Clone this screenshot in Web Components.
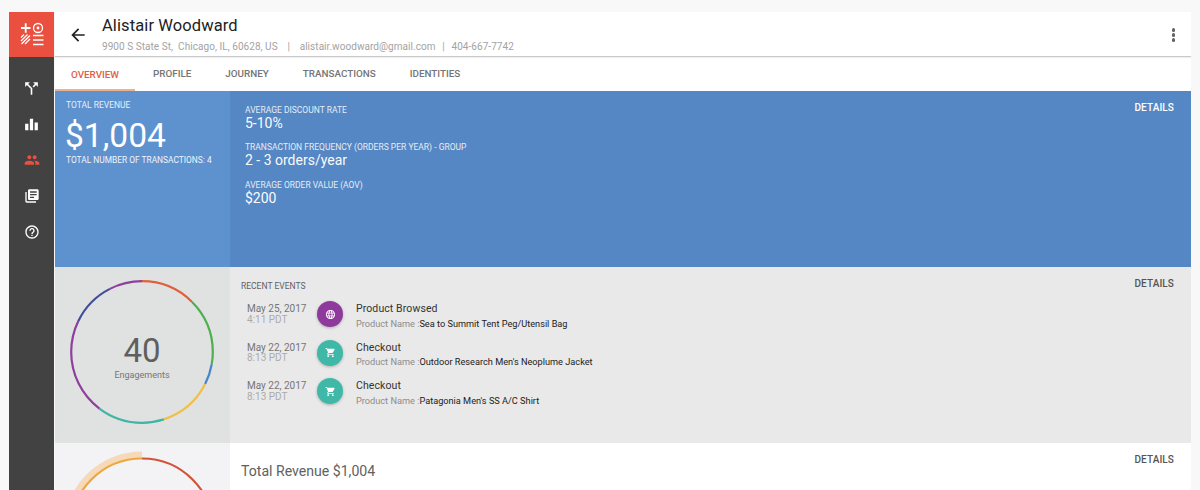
<!DOCTYPE html>
<html>
<head>
<meta charset="utf-8">
<style>
  html, body{ margin:0; height:490px; overflow:hidden; background:#f8f8f8; font-family:Roboto, "Liberation Sans", sans-serif; }
  body{ display:flex; padding:12px 9px 0 9px; box-sizing:border-box; }
</style>
</head>
<body>
<crm-shell>
  <crm-rail slot="rail"></crm-rail>
  <profile-header name="Alistair Woodward" address="9900 S State St,  Chicago, IL, 60628, US" email="alistair.woodward@gmail.com" phone="404-667-7742"></profile-header>
  <tab-strip tabs="Overview,Profile,Journey,Transactions,Identities"></tab-strip>

  <crm-panel tone="blue" height="176">
    <div slot="side" style="padding:9px 0 0 11px">
      <big-stat label="Total Revenue" value="$1,004" foot="Total Number of Transactions: 4"></big-stat>
    </div>
    <div style="padding:14px 0 0 15px">
      <small-stat label="Average Discount Rate" value="5-10%"></small-stat>
      <small-stat label="Transaction Frequency (Orders Per Year) - Group" value="2 - 3 orders/year"></small-stat>
      <small-stat label="Average Order Value (AOV)" value="$200"></small-stat>
    </div>
  </crm-panel>

  <crm-panel tone="grey" height="176">
    <engagement-ring slot="side" value="40" label="Engagements"></engagement-ring>
    <events-list>
      <event-row date="May 25, 2017" time="4:11 PDT" kind="browse" title="Product Browsed" product="Sea to Summit Tent Peg/Utensil Bag"></event-row>
      <event-row date="May 22, 2017" time="8:13 PDT" kind="cart" title="Checkout" product="Outdoor Research Men's Neoplume Jacket"></event-row>
      <event-row date="May 22, 2017" time="8:13 PDT" kind="cart" title="Checkout" product="Patagonia Men's SS A/C Shirt"></event-row>
    </events-list>
  </crm-panel>

  <crm-panel tone="white" height="176">
    <revenue-ring slot="side"></revenue-ring>
    <div style="padding:19px 0 0 11px;font-size:14.1px;color:#616161;line-height:18px">Total Revenue $1,004</div>
  </crm-panel>
</crm-shell>

<script>
const ICONS = {
  split:'M14 4l2.29 2.29-2.88 2.88 1.42 1.42 2.88-2.88L20 10V4zm-4 0H4v6l2.29-2.29 4.71 4.7V20h2v-8.41l-5.29-5.3z',
  bars:'M3 11h4.6v9H3zM9.7 4h4.6v16H9.7zM16.4 9H21v11h-4.6z',
  people:'M16 11c1.66 0 2.99-1.34 2.99-3S17.66 5 16 5c-1.66 0-3 1.34-3 3s1.34 3 3 3zm-8 0c1.66 0 2.99-1.34 2.99-3S9.66 5 8 5C6.34 5 5 6.34 5 8s1.34 3 3 3zm0 2c-2.33 0-7 1.17-7 3.5V19h14v-2.5c0-2.33-4.67-3.5-7-3.5zm8 0c-.29 0-.62.02-.97.05 1.16.84 1.97 1.97 1.97 3.45V19h6v-2.5c0-2.33-4.67-3.5-7-3.5z',
  books:'M4 6H2v14c0 1.1.9 2 2 2h14v-2H4V6zm16-4H8c-1.1 0-2 .9-2 2v12c0 1.1.9 2 2 2h12c1.1 0 2-.9 2-2V4c0-1.1-.9-2-2-2zm-1 9H9V9h10v2zm-4 4H9v-2h6v2zm4-8H9V5h10v2z',
  help:'M11 18h2v-2h-2v2zm1-16C6.48 2 2 6.48 2 12s4.48 10 10 10 10-4.48 10-10S17.52 2 12 2zm0 18c-4.41 0-8-3.59-8-8s3.59-8 8-8 8 3.59 8 8-3.59 8-8 8zm0-14c-2.21 0-4 1.79-4 4h2c0-1.1.9-2 2-2s2 .9 2 2c0 2-3 1.75-3 5h2c0-2.25 3-2.5 3-5 0-2.21-1.79-4-4-4z',
  back:'M20 11H7.83l5.59-5.59L12 4l-8 8 8 8 1.41-1.41L7.83 13H20v-2z',
  browse:'M11.99 2C6.47 2 2 6.48 2 12s4.47 10 9.99 10C17.52 22 22 17.52 22 12S17.52 2 11.99 2zm6.93 6h-2.95c-.32-1.25-.78-2.45-1.38-3.56 1.84.63 3.37 1.91 4.33 3.56zM12 4.04c.83 1.2 1.48 2.53 1.91 3.96h-3.82c.43-1.43 1.08-2.76 1.91-3.96zM4.26 14C4.1 13.36 4 12.69 4 12s.1-1.36.26-2h3.38c-.08.66-.14 1.32-.14 2 0 .68.06 1.34.14 2H4.26zm.82 2h2.95c.32 1.25.78 2.45 1.38 3.56-1.84-.63-3.37-1.9-4.33-3.56zm2.95-8H5.08c.96-1.66 2.49-2.93 4.33-3.56C8.81 5.55 8.35 6.75 8.03 8zM12 19.96c-.83-1.2-1.48-2.53-1.91-3.96h3.82c-.43 1.43-1.08 2.76-1.91 3.96zM14.34 14H9.66c-.09-.66-.16-1.32-.16-2 0-.68.07-1.35.16-2h4.68c.09.65.16 1.32.16 2 0 .68-.07 1.34-.16 2zm.25 5.56c.6-1.11 1.06-2.31 1.38-3.56h2.95c-.96 1.65-2.49 2.93-4.33 3.56zM16.36 14c.08-.66.14-1.32.14-2 0-.68-.06-1.34-.14-2h3.38c.16.64.26 1.31.26 2s-.1 1.36-.26 2h-3.38z',
  cart:'M7 18c-1.1 0-1.99.9-1.99 2S5.9 22 7 22s2-.9 2-2-.9-2-2-2zM1 2v2h2l3.6 7.59-1.35 2.45c-.16.28-.25.61-.25.96 0 1.1.9 2 2 2h12v-2H7.42c-.14 0-.25-.11-.25-.25l.03-.12.9-1.63h7.45c.75 0 1.41-.41 1.75-1.03l3.58-6.49c.08-.14.12-.31.12-.48 0-.55-.45-1-1-1H5.21l-.94-2H1zm16 16c-1.1 0-1.99.9-1.99 2s.89 2 1.99 2 2-.9 2-2-.9-2-2-2z'
};
const icon = (name, size, color) => `<svg width='${size}' height='${size}' viewBox='0 0 24 24' fill='${color}'><path d='${ICONS[name]}'/></svg>`;

customElements.define('crm-shell', class extends HTMLElement{
  constructor(){
    super();
    this.attachShadow({mode:'open'}).innerHTML = `
      <style>
        :host{ display:flex; flex:1; min-width:0; height:478px; overflow:hidden; }
        main{ flex:1; min-width:0; display:flex; flex-direction:column; margin-left:1px; background:#fff; }
      </style>
      <slot name='rail'></slot>
      <main><slot></slot></main>`;
  }
});

customElements.define('crm-rail', class extends HTMLElement{
  constructor(){
    super();
    const items = [['split','#fff',19],['bars','#fff',17],['people','#e9503f',16],['books','#fff',16],['help','#fff',16]];
    this.attachShadow({mode:'open'}).innerHTML = `
      <style>
        :host{ display:flex; flex-direction:column; width:45px; height:100%; background:#424242; }
        .logo{ height:43px; padding-bottom:2px; background:#e9503f; display:flex; align-items:center; justify-content:center; }
        nav{ display:flex; flex-direction:column; align-items:center; gap:18px; padding-top:22px; }
        nav span{ display:flex; height:18px; align-items:center; }
      </style>
      <div class='logo'>
        <svg width='24' height='24' viewBox='0 0 24 24' fill='none' stroke='#fff'>
          <path d='M1 6h9.5M5.7 1.3v9.4' stroke-width='1.8'/>
          <circle cx='18' cy='6' r='4.5' stroke-width='1.3'/><circle cx='18' cy='6' r='1.4' fill='#fff' stroke='none'/>
          <path d='M1 15.5l3-3M1 19l6.500-6.500M1.500 22l8.500-8.500M5 22l5-5' stroke-width='1.3'/>
          <path d='M13 13.5h10.500M13 18h10.500M13 22.5h10.500' stroke-width='1.6'/>
        </svg>
      </div>
      <nav>${items.map(([n,c,s]) => `<span>${icon(n,s,c)}</span>`).join('')}</nav>`;
  }
});

customElements.define('profile-header', class extends HTMLElement{
  connectedCallback(){
    const shadow = this.attachShadow({mode:'open'});
    shadow.innerHTML = `
      <style>
        :host{ display:flex; align-items:flex-start; height:44px; flex:none; border-bottom:1px solid #c9c9c9; box-shadow:0 1px 1px rgba(0,0,0,.06); position:relative; }
        .back{ display:flex; margin:13px 0 0 13px; }
        .who{ margin-left:14px; padding-top:4px; flex:1; }
        h1{ margin:0; font-size:16.5px; font-weight:400; line-height:20px; color:#212121; letter-spacing:.1px; }
        p{ display:flex; margin:4px 0 0; font-size:10px; line-height:13px; color:#a3a3a3; white-space:pre; letter-spacing:.05px; }
        p i{ font-style:normal; width:22px; text-align:center; }
        p i + span + i{ width:16px; }
        .more{ display:flex; flex-direction:column; gap:1.5px; margin:16px 16px 0 0; }
        .more i{ width:3.5px; height:3.5px; border-radius:50%; background:#616161; }
      </style>
      <span class='back'>${icon('back',20,'#212121')}</span>
      <div class='who'>
        <h1>${this.getAttribute('name')}</h1>
        <p><span>${this.getAttribute('address')}</span><i>|</i><span>${this.getAttribute('email')}</span><i>|</i><span>${this.getAttribute('phone')}</span></p>
      </div>
      <div class='more'><i></i><i></i><i></i></div>`;
  }
});

customElements.define('tab-strip', class extends HTMLElement{
  connectedCallback(){
    const tabs = this.getAttribute('tabs').split(',');
    this.attachShadow({mode:'open'}).innerHTML = `
      <style>
        :host{ display:flex; height:34px; flex:none; background:#fff; }
        a{ display:flex; align-items:center; box-sizing:border-box; height:34px; padding:0 17px 2px; font-size:9.85px; font-weight:500; text-transform:uppercase; color:#757575; }
        a.on{ width:80px; margin-right:1px; justify-content:center; padding:2px 0 0; color:#e0603f; border-bottom:2px solid #eab38f; }
      </style>
      ${tabs.map((t,i) => `<a class='${i==0?'on':''}'>${t}</a>`).join('')}`;
  }
});

customElements.define('crm-panel', class extends HTMLElement{
  connectedCallback(){
    const tones = {
      blue:{side:'#5e92cf',body:'#5587c4',link:'#fff'},
      grey:{side:'#e0e1e1',body:'#e9e9e9',link:'#555'},
      white:{side:'#f3f3f6',body:'#fff',link:'#555'}
    };
    const t = tones[this.getAttribute('tone')];
    this.attachShadow({mode:'open'}).innerHTML = `
      <style>
        :host{ display:flex; flex:none; height:${this.getAttribute('height')}px; background:${t.body}; }
        .side{ width:175px; flex:none; background:${t.side}; box-sizing:border-box; }
        .body{ flex:1; min-width:0; }
        .link{ flex:none; padding:11px 17px 0 0; font-size:10px; font-weight:500; line-height:12px; letter-spacing:.1px; color:${t.link}; }
      </style>
      <div class='side'><slot name='side'></slot></div>
      <div class='body'><slot></slot></div>
      <div class='link'>DETAILS</div>`;
  }
});

customElements.define('big-stat', class extends HTMLElement{
  connectedCallback(){
    this.attachShadow({mode:'open'}).innerHTML = `
      <style>
        :host{ display:block; color:#fff; }
        .l{ font-size:8.5px; line-height:10px; text-transform:uppercase; opacity:.85; }
        .v{ font-size:33.6px; line-height:38px; margin:7px 0 0 -1px; }
        .f{ font-size:8.4px; line-height:10px; text-transform:uppercase; opacity:.9; }
      </style>
      <div class='l'>${this.getAttribute('label')}</div>
      <div class='v'>${this.getAttribute('value')}</div>
      <div class='f'>${this.getAttribute('foot')}</div>`;
  }
});

customElements.define('small-stat', class extends HTMLElement{
  connectedCallback(){
    this.attachShadow({mode:'open'}).innerHTML = `
      <style>
        :host{ display:block; color:#fff; height:37.3px; }
        .l{ font-size:8.5px; line-height:11px; text-transform:uppercase; opacity:.85; }
        .v{ font-size:14px; line-height:16px; margin-top:-1px; opacity:.97; }
      </style>
      <div class='l'>${this.getAttribute('label')}</div>
      <div class='v'>${this.getAttribute('value')}</div>`;
  }
});

customElements.define('engagement-ring', class extends HTMLElement{
  connectedCallback(){
    const segs = [[0,45,'#e0603c'],[45,100,'#4caf50'],[100,117,'#4a86c5'],[117,162,'#f0bf45'],[162,217,'#3fb5a5'],[217,296,'#8e3f9e'],[296,333,'#3f4f9a'],[333,360,'#8e3f9e']];
    this.attachShadow({mode:'open'}).innerHTML = `
      <style>
        :host{ display:block; position:relative; height:176px; }
        svg{ display:block; margin-left:15px; padding-top:13px; }
        .c{ position:absolute; left:0; width:174px; top:65px; text-align:center; color:#5f5f5f; }
        .n{ font-size:33px; line-height:38px; }
        .t{ font-size:9px; line-height:11px; color:#757575; }
      </style>
      <svg width='144' height='144' viewBox='0 0 144 144' fill='none' stroke-width='2.2'>
        ${segs.map(([a,b,c]) => `<circle cx='72' cy='72' r='70.8' stroke='${c}' pathLength='360' stroke-dasharray='${b-a} ${360-b+a}' stroke-dashoffset='${-a}' transform='rotate(-90 72 72)'/>`).join('')}
      </svg>
      <div class='c'><div class='n'>${this.getAttribute('value')}</div><div class='t'>${this.getAttribute('label')}</div></div>`;
  }
});

customElements.define('revenue-ring', class extends HTMLElement{
  connectedCallback(){
    this.attachShadow({mode:'open'}).innerHTML = `
      <style>
        :host{ display:block; height:176px; }
        svg{ display:block; margin-left:7px; padding-top:7px; }
      </style>
      <svg width='160' height='160' viewBox='0 0 160 160' fill='none'>
        <circle cx='80' cy='80' r='75' stroke='#f6d9b8' stroke-width='7' pathLength='360' stroke-dasharray='100 260' stroke-dashoffset='100' transform='rotate(-90 80 80)'/>
        <circle cx='80' cy='80' r='71.5' stroke='#efa63d' stroke-width='2.2' pathLength='360' stroke-dasharray='100 260' stroke-dashoffset='100' transform='rotate(-90 80 80)'/>
        <circle cx='80' cy='80' r='71.5' stroke='#d2533a' stroke-width='2.2' pathLength='360' stroke-dasharray='100 260' transform='rotate(-90 80 80)'/>
      </svg>`;
  }
});

customElements.define('events-list', class extends HTMLElement{
  constructor(){
    super();
    this.attachShadow({mode:'open'}).innerHTML = `
      <style>
        :host{ display:block; padding:14px 0 0 11px; }
        h2{ margin:0 0 7px; font-size:8.5px; line-height:10px; font-weight:400; color:#616161; }
        div{ display:flex; flex-direction:column; gap:6.7px; padding-left:6px; }
      </style>
      <h2>RECENT EVENTS</h2>
      <div><slot></slot></div>`;
  }
});

customElements.define('event-row', class extends HTMLElement{
  connectedCallback(){
    const kind = this.getAttribute('kind');
    const bg = kind == 'browse' ? '#8e3a9d' : '#3fb8a8';
    this.attachShadow({mode:'open'}).innerHTML = `
      <style>
        :host{ display:flex; align-items:flex-start; height:32px; }
        .when{ width:70px; flex:none; font-size:10px; line-height:10.5px; padding-top:6px; color:#757575; }
        .when span{ display:block; color:#ababab; }
        .dot{ width:26px; height:26px; flex:none; margin-top:3px; border-radius:50%; background:${bg}; display:flex; align-items:center; justify-content:center; box-shadow:0 1px 3px rgba(0,0,0,.25); }
        .what{ margin-left:13px; }
        .t{ font-size:10.5px; line-height:13px; padding-top:4px; color:#333; letter-spacing:.1px; }
        .p{ font-size:9.2px; line-height:12px; margin-top:2.5px; color:#8c8c8c; white-space:nowrap; }
        .p b{ font-weight:400; color:#222; }
      </style>
      <div class='when'>${this.getAttribute('date')}<span>${this.getAttribute('time')}</span></div>
      <div class='dot'>${icon(kind,11,'#fff')}</div>
      <div class='what'>
        <div class='t'>${this.getAttribute('title')}</div>
        <div class='p'>Product Name :<b>${this.getAttribute('product')}</b></div>
      </div>`;
  }
});
</script>
</body>
</html>
